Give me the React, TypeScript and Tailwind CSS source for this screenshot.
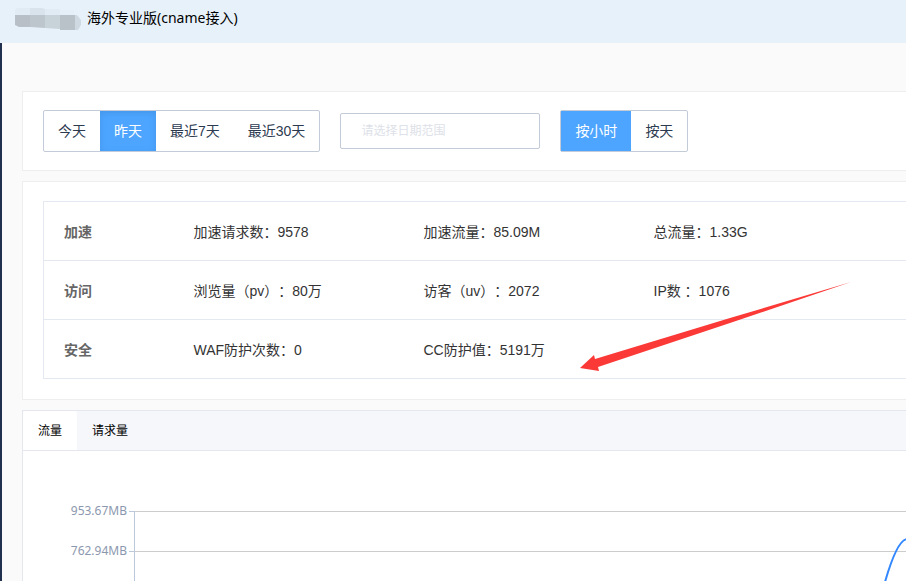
import clsx from "clsx";
import { useState } from "react";

const ranges = ["今天", "昨天", "最近7天", "最近30天"];
const units = ["按小时", "按天"];
const tabs = ["流量", "请求量"];

const stats = [
  {
    title: "加速",
    cells: ["加速请求数：9578", "加速流量：85.09M", "总流量：1.33G"],
  },
  {
    title: "访问",
    cells: ["浏览量（pv）：80万", "访客（uv）：2072", "IP数 ：1076"],
  },
  {
    title: "安全",
    cells: ["WAF防护次数：0", "CC防护值：5191万", ""],
  },
];

export default function App() {
  const [range, setRange] = useState("昨天");
  const [unit, setUnit] = useState("按小时");
  const [tab, setTab] = useState("流量");

  return (
    <div className="flex min-h-screen flex-col overflow-hidden bg-[#fafafa] font-['Liberation_Sans','Noto_Sans_CJK_SC',sans-serif] text-sm text-[#333]">
      <header className="flex h-[43px] shrink-0 items-start bg-[#e7f1fa] pt-2 pl-[15px]">
        <MaskedName />
        <h1 className="ml-[5px] font-['Noto_Sans','Noto_Sans_CJK_SC',sans-serif] leading-5 text-black">
          海外专业版(cname接入)
        </h1>
      </header>

      <main className="flex grow flex-col border-l-2 border-[#22304f] pt-12 pl-5">
        <section className="flex items-center gap-5 border border-r-0 border-[#eee] bg-white py-[18px] pl-5">
          <ButtonGroup
            label="时间"
            items={ranges}
            value={range}
            onChange={setRange}
            pressed
          />
          <input
            type="text"
            aria-label="日期范围"
            placeholder="请选择日期范围"
            className="h-9 w-[200px] rounded-xs border border-[#c3cbd9] bg-white px-5 text-xs placeholder:text-[#dde1e8]"
          />
          <ButtonGroup
            label="粒度"
            items={units}
            value={unit}
            onChange={setUnit}
          />
        </section>

        <section className="relative mt-[10px] border border-r-0 border-[#eee] bg-white pt-[19px] pb-5 pl-5">
          <table className="w-full table-fixed border border-r-0 border-[#e4e8f1] [text-spacing-trim:space-all]">
            <colgroup>
              <col className="w-[130px]" />
              <col className="w-[230px]" />
              <col className="w-[230px]" />
              <col />
            </colgroup>
            <tbody>
              {stats.map(({ title, cells }) => (
                <tr key={title} className="h-[59px] border-b border-[#e4e8f1]">
                  <th
                    scope="row"
                    className="pt-[2px] pl-5 text-left font-bold text-[#666]"
                  >
                    {title}
                  </th>
                  {cells.map((cell, index) => (
                    <td key={index} className="pt-[2px] pl-5 whitespace-nowrap">
                      {cell}
                    </td>
                  ))}
                </tr>
              ))}
            </tbody>
          </table>
          <Arrow />
        </section>

        <section className="mt-[10px] flex grow flex-col border border-r-0 border-b-0 border-[#e4e7ed] bg-white">
          <div
            role="tablist"
            className="flex h-10 border-b border-[#e4e7ed] bg-[#f5f7fb] text-xs text-black"
          >
            {tabs.map((item) => (
              <button
                key={item}
                role="tab"
                aria-selected={item === tab}
                onClick={() => setTab(item)}
                className={clsx(
                  "rounded-t-xs px-[15px]",
                  item === tab && "bg-white"
                )}
              >
                {item}
              </button>
            ))}
          </div>
          <Chart />
        </section>
      </main>
    </div>
  );
}

const ButtonGroup = ({
  label,
  items,
  value,
  onChange,
  pressed = false,
}: {
  label: string;
  items: string[];
  value: string;
  onChange: (item: string) => void;
  pressed?: boolean;
}) => (
  <div
    role="group"
    aria-label={label}
    className="flex shrink-0 rounded-xs border border-[#c3cbd9] bg-white"
  >
    {items.map((item) => (
      <button
        key={item}
        aria-pressed={item === value}
        onClick={() => onChange(item)}
        className={clsx(
          "h-10 px-[14px]",
          item === value ? "bg-[#4da5ff] text-white" : "text-[#2c3a50]",
          item === value && pressed && "shadow-[inset_0_2px_6px_#4496e8]"
        )}
      >
        {item}
      </button>
    ))}
  </div>
);

// site name hidden behind a mosaic
const MaskedName = () => (
  <svg width="67" height="22" aria-hidden="true">
    <path d="M2 0h13v7H0V2z" fill="#e0ebf4" />
    <path d="M15 0h12l3 1v6H15z" fill="#d8e3ec" />
    <path d="M30 1h13l2 1v5H30z" fill="#e0ebf4" />
    <path d="M45 2h13l2 5H45z" fill="#e4eff8" />
    <path d="M0 7h15v12H4l-4-2z" fill="#b8bfc7" />
    <path d="M15 7h15v13l-15-1z" fill="#bdc5cd" />
    <path d="M30 7h15v14l-15-1z" fill="#c8d2d9" />
    <path d="M45 7h15v15H45z" fill="#b9c1c9" />
    <path d="M60 7h2l4 5v5l-3 5h-3z" fill="#ced9e1" />
  </svg>
);

const Arrow = () => (
  <svg
    width="272"
    height="90"
    aria-hidden="true"
    className="pointer-events-none absolute top-[100px] left-[557px]"
  >
    <path
      d="M0 86 14 73l1 4L150 36 271 0 150 41 18 85l1 4z"
      fill="#fb3a38"
    />
  </svg>
);

const Chart = () => (
  <svg
    width="100%"
    height="130"
    aria-label="流量"
    className="font-['Noto_Sans',sans-serif] text-xs"
  >
    <g stroke="#ccc" shapeRendering="crispEdges">
      <line x1="112" y1="60.5" x2="100%" y2="60.5" />
      <line x1="112" y1="100.5" x2="100%" y2="100.5" />
    </g>
    <path
      d="M106 60.5h6M106 100.5h6M111.5 60v70"
      stroke="#bcc8dc"
      shapeRendering="crispEdges"
    />
    <g fill="#8c98ae" textAnchor="end">
      <text x="104" y="64">
        953.67MB
      </text>
      <text x="104" y="104">
        762.94MB
      </text>
    </g>
    <path
      d="M862 131C868 110 876 89 884 88"
      fill="none"
      stroke="#3388ff"
      strokeWidth="2"
    />
  </svg>
);
